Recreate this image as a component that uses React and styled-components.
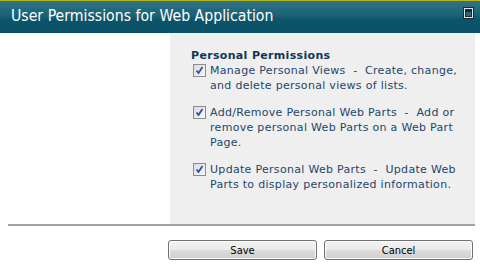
import styled, { createGlobalStyle } from 'styled-components';

const GlobalStyle = createGlobalStyle`
    html, body {
        margin: 0;
        padding: 0;
        background: #ffffff;
    }
    body {
        width: 480px;
        height: 265px;
        overflow: hidden;
    }
`;

const Dialog = styled.div`
    width: 480px;
    height: 265px;
    display: flex;
    flex-direction: column;
    background: #ffffff;
`;

const TitleBar = styled.div`
    display: flex;
    align-items: center;
    justify-content: space-between;
    height: 32px;
    padding: 0 6px 0 11px;
    border-top: 1px solid #b4b41c;
    background: linear-gradient(to bottom, #2f7485 0%, #1a6175 45%, #0b5368 60%, #0a5267 100%);
`;

const Title = styled.span`
    font-family: "DejaVu Sans Condensed", "DejaVu Sans", sans-serif;
    font-size: 15.7px;
    color: #ffffff;
    padding-bottom: 3px;
`;

const MaxButton = styled.div`
    display: flex;
    margin-bottom: 9px;
`;

const Body = styled.div`
    display: flex;
    margin: 0 5px 0 8px;
    height: 191px;
`;

const LeftColumn = styled.div`
    width: 162px;
`;

const Panel = styled.div`
    flex: 1;
    background: #efefef;
    padding: 15px 0 0 21px;
    font-family: "DejaVu Sans", Verdana, sans-serif;
    font-size: 11px;
    letter-spacing: 0.3px;
    color: #23466c;
`;

const Heading = styled.div`
    font-weight: bold;
    letter-spacing: 0.33px;
    color: #0f365a;
    line-height: 15px;
    margin-bottom: 0;
`;

const Option = styled.label`
    display: flex;
    align-items: flex-start;
    margin-left: 2px;
    margin-bottom: 12px;
    line-height: 15px;
`;

const Box = styled.span`
    flex: none;
    width: 11px;
    height: 11px;
    margin: 1px 4px 0 0;
    border: 1px solid #8c8c8c;
    background: linear-gradient(to bottom right, #dcdcdc, #f8f8f8);
    display: flex;
    align-items: center;
    justify-content: center;
`;

const OptionText = styled.span`
    width: 258px;
`;

const Separator = styled.div`
    height: 2px;
    margin: 0 5px 0 8px;
    background: #a3a3a3;
`;

const ButtonRow = styled.div`
    display: flex;
    justify-content: flex-end;
    gap: 7px;
    padding: 14px 7px 0 0;
`;

const Button = styled.button`
    width: 149px;
    height: 20px;
    padding: 0;
    border: 1px solid #707070;
    border-radius: 3px;
    background: linear-gradient(to bottom, #f2f2f2 0%, #ebebeb 50%, #dddddd 51%, #cfcfcf 100%);
    box-shadow: inset 0 0 0 1px #fcfcfc;
    font-family: "DejaVu Sans Condensed", "DejaVu Sans", sans-serif;
    font-size: 11px;
    color: #000000;
`;

function Check() {
    return (
        <Box>
            <svg width="9" height="9" viewBox="0 0 9 9">
                <path d="M1.5 4.5 L3.5 7 L7.5 1" stroke="#2a4fb0" strokeWidth="1.8" fill="none" />
            </svg>
        </Box>
    );
}

const options = [
    'Manage Personal Views\u00a0 - \u00a0Create, change, and delete personal views of lists.',
    'Add/Remove Personal Web Parts\u00a0 - \u00a0Add or remove personal Web Parts on a Web Part Page.',
    'Update Personal Web Parts\u00a0 - \u00a0Update Web Parts to display personalized information.',
];

export default function App() {
    return (
        <Dialog>
            <GlobalStyle />
            <TitleBar>
                <Title>User Permissions for Web Application</Title>
                <MaxButton>
                    <svg width="11" height="12" viewBox="0 0 11 12">
                        <rect x="0.5" y="0.5" width="10" height="11" fill="#dfe8ea" stroke="#1b2830" />
                        <rect x="2" y="2" width="7" height="8" fill="#1b2830" />
                        <rect x="3" y="5" width="5" height="4" fill="#2b6678" />
                    </svg>
                </MaxButton>
            </TitleBar>
            <Body>
                <LeftColumn />
                <Panel>
                    <Heading>Personal Permissions</Heading>
                    {options.map((text) => (
                        <Option key={text}>
                            <Check />
                            <OptionText>{text}</OptionText>
                        </Option>
                    ))}
                </Panel>
            </Body>
            <Separator />
            <ButtonRow>
                <Button>Save</Button>
                <Button>Cancel</Button>
            </ButtonRow>
        </Dialog>
    );
}
